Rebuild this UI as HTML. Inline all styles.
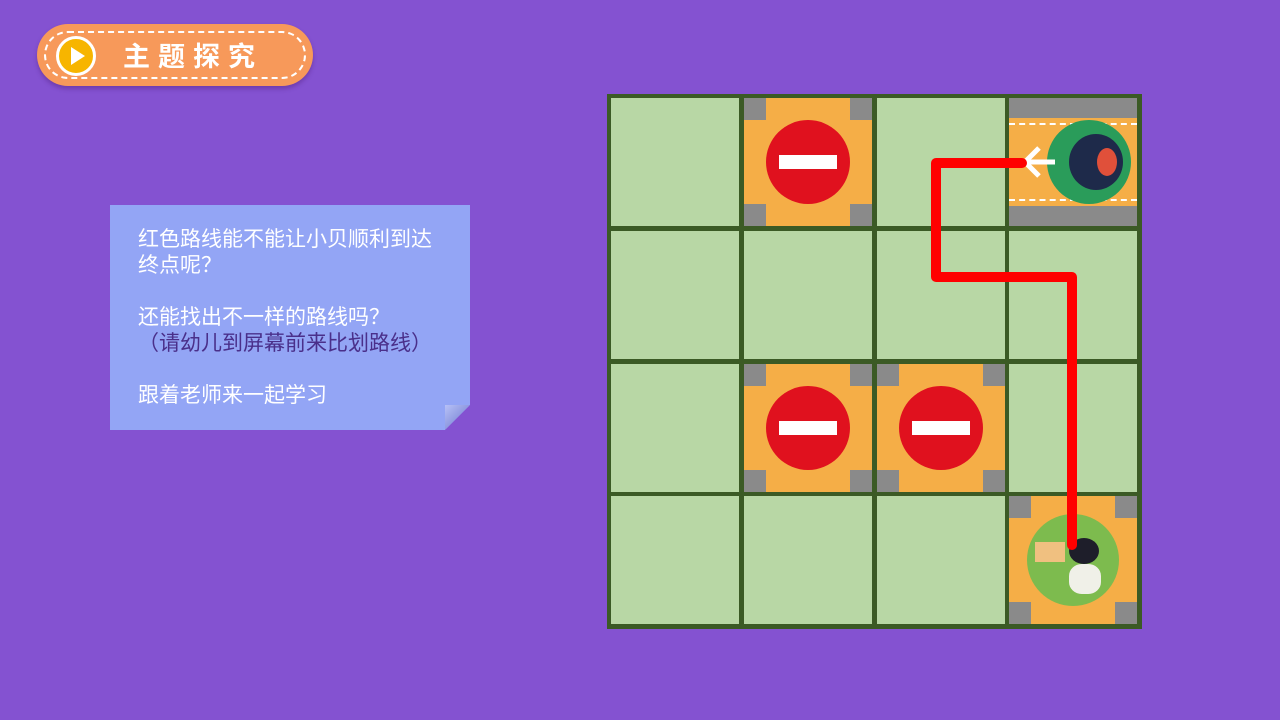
<!DOCTYPE html>
<html><head><meta charset="utf-8"><style>
body{margin:0;width:1280px;height:720px;background:#8452d1;position:relative;overflow:hidden;font-family:"Liberation Sans","Noto Sans CJK SC",sans-serif}
.btn{position:absolute;left:37px;top:24px;width:276px;height:62px;border-radius:31px;background:#f7995a;box-shadow:0 3px 4px rgba(80,30,120,.4)}
.btn .d{position:absolute;left:7px;top:7px;right:7px;bottom:7px;border:2.5px dashed #fff;border-radius:26px}
.btn .p{position:absolute;left:19px;top:12px;width:34px;height:34px;border-radius:50%;background:#f7b500;border:3px solid #fff}
.btn .t{position:absolute;left:86px;top:11px;color:#fff;font-size:27px;font-weight:bold;letter-spacing:8px}
.note{position:absolute;left:110px;top:205px;width:360px;height:225px;background:#93a5f5;box-shadow:2px 3px 3px rgba(40,20,90,.45);clip-path:polygon(0 0,100% 0,100% 200px,335px 100%,0 100%)}
.fold{position:absolute;left:445px;top:405px;width:25px;height:25px;background:linear-gradient(135deg,#b7c1f7 0,#8f9ae0 50%,transparent 50%)}
.txt{position:absolute;left:138px;top:227px;color:#fff;font-size:21px;line-height:26px}
.board{position:absolute;left:607px;top:94px;width:535px;height:535px;background:#3b5a25}
.c{position:absolute;width:128px;height:128px;background:#b8d7a5}
.o{background:#f5ae47}
.g{position:absolute;width:22px;height:22px;background:#8a8a8a}
.sign{position:absolute;left:22px;top:22px;width:84px;height:84px;border-radius:50%;background:#e0111e}
.sign:after{content:"";position:absolute;left:13px;top:35px;width:58px;height:14px;background:#fff}
.m{position:absolute;width:14px;height:14px;border:0 dashed #fff}
</style></head><body>
<div class="btn"><div class="d"></div><div class="p"><svg width="34" height="34"><polygon points="12,8 26,17 12,26" fill="#fff"/></svg></div><div class="t">主题探究</div></div>
<div class="note"></div><div class="fold"></div>
<div class="txt">红色路线能不能让小贝顺利到达<br>终点呢？<br><br>还能找出不一样的路线吗？<br><span style="color:#4a2f8a">（请幼儿到屏幕前来比划路线）</span><br><br>跟着老师来一起学习</div>
<div class="board">
<div class="c" style="left:4px;top:4px"></div>
<div class="c o" style="left:137px;top:4px"><div class="g" style="left:0;top:0"></div><div class="g" style="right:0;top:0"></div><div class="g" style="left:0;bottom:0"></div><div class="g" style="right:0;bottom:0"></div><div class="sign"></div></div>
<div class="c" style="left:270px;top:4px"></div>
<div class="c o" style="left:402px;top:4px"><div style="position:absolute;left:0;top:0;width:128px;height:20px;background:#8a8a8a"></div><div style="position:absolute;left:0;bottom:0;width:128px;height:20px;background:#8a8a8a"></div><div style="position:absolute;left:0;top:25px;width:128px;border-top:2px dashed #fff"></div><div style="position:absolute;left:0;bottom:25px;width:128px;border-top:2px dashed #fff"></div>
<div style="position:absolute;left:38px;top:22px;width:84px;height:84px;border-radius:50%;background:#2a9c5a"><div style="position:absolute;left:22px;top:14px;width:54px;height:56px;border-radius:50%;background:#1e2a4a"></div><div style="position:absolute;left:50px;top:28px;width:20px;height:28px;border-radius:50%;background:#e0503a"></div></div>
<svg style="position:absolute;left:10px;top:44px" width="40" height="40"><path d="M4 20H36M20 6L6 20L20 34" stroke="#fff" stroke-width="5" fill="none"/></svg></div>
<div class="c" style="left:4px;top:137px"></div><div class="c" style="left:137px;top:137px"></div><div class="c" style="left:270px;top:137px"></div><div class="c" style="left:402px;top:137px"></div>
<div class="c" style="left:4px;top:270px"></div>
<div class="c o" style="left:137px;top:270px"><div class="g" style="left:0;top:0"></div><div class="g" style="right:0;top:0"></div><div class="g" style="left:0;bottom:0"></div><div class="g" style="right:0;bottom:0"></div><div class="sign"></div></div>
<div class="c o" style="left:270px;top:270px"><div class="g" style="left:0;top:0"></div><div class="g" style="right:0;top:0"></div><div class="g" style="left:0;bottom:0"></div><div class="g" style="right:0;bottom:0"></div><div class="sign"></div></div>
<div class="c" style="left:402px;top:270px"></div>
<div class="c" style="left:4px;top:402px"></div><div class="c" style="left:137px;top:402px"></div><div class="c" style="left:270px;top:402px"></div>
<div class="c o" style="left:402px;top:402px"><div class="g" style="left:0;top:0"></div><div class="g" style="right:0;top:0"></div><div class="g" style="left:0;bottom:0"></div><div class="g" style="right:0;bottom:0"></div>
<div style="position:absolute;left:18px;top:18px;width:92px;height:92px;border-radius:50%;background:#7dbb4e"><div style="position:absolute;left:8px;top:28px;width:30px;height:20px;background:#f0c080"></div><div style="position:absolute;left:42px;top:24px;width:30px;height:26px;border-radius:50%;background:#1e1e2a"></div><div style="position:absolute;left:42px;top:50px;width:32px;height:30px;border-radius:40%;background:#f0f0e8"></div></div></div>
</div>
<svg style="position:absolute;left:0;top:0" width="1280" height="720"><path d="M1022 163H936V277H1072V545" stroke="#f00" stroke-width="10" fill="none" stroke-linecap="round" stroke-linejoin="round"/></svg>
</body></html>
